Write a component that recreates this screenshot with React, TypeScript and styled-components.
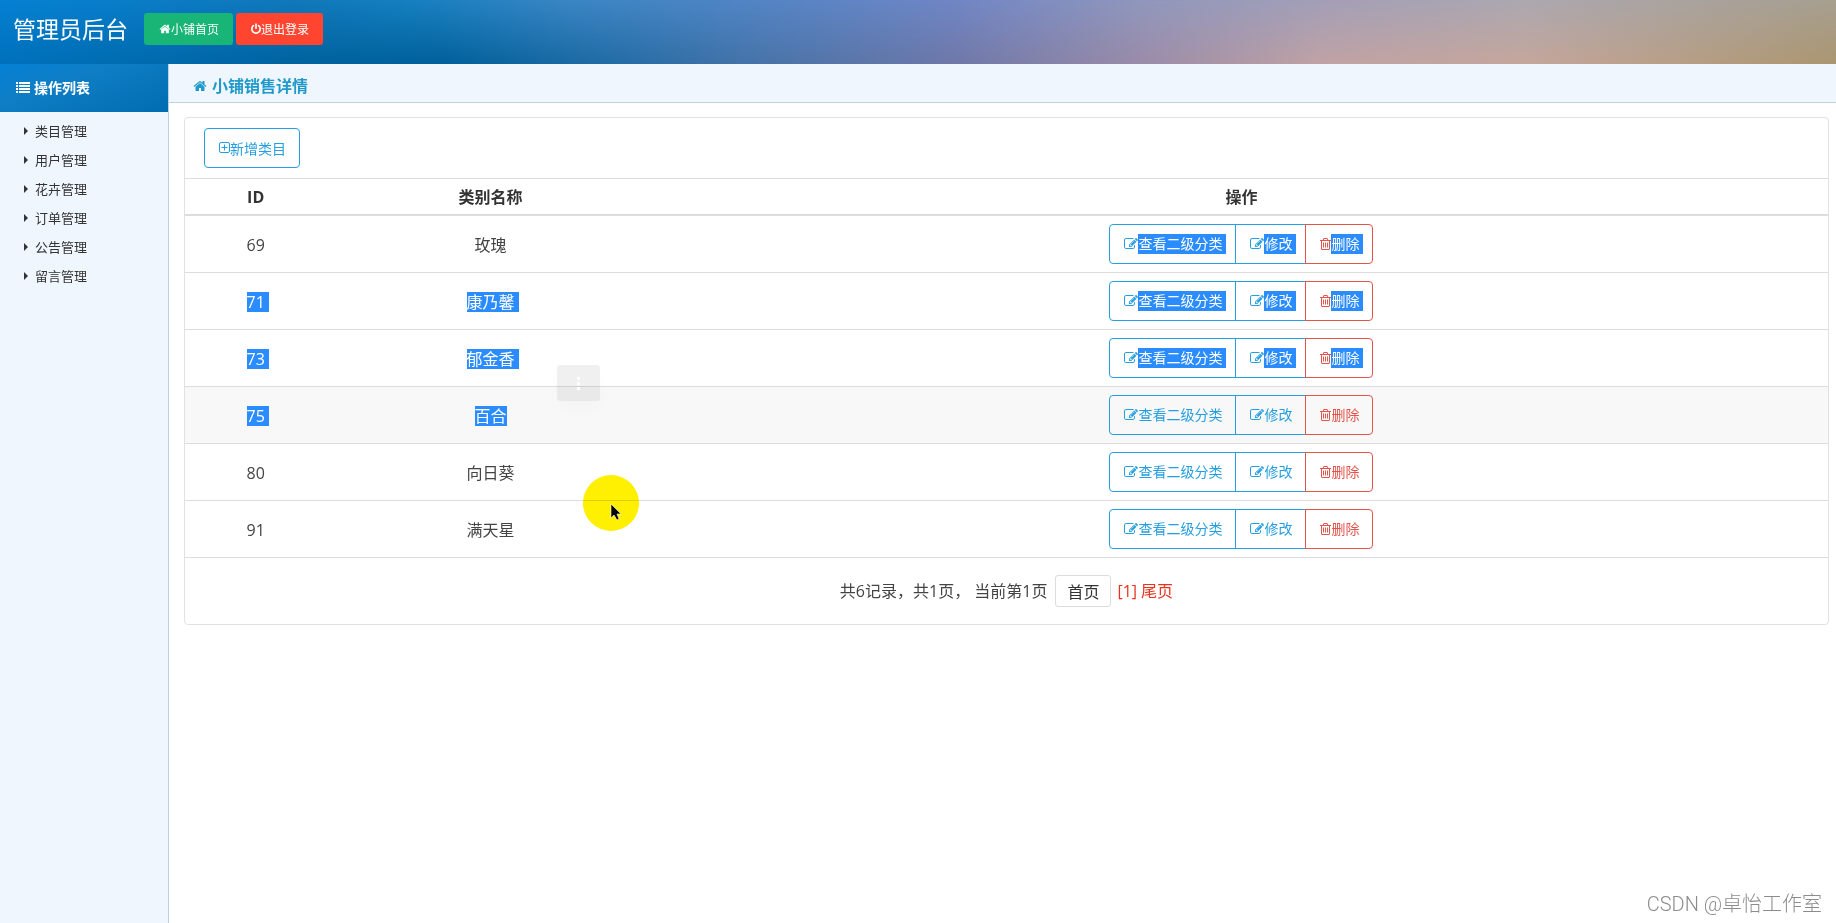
import React from 'react';
import styled, { createGlobalStyle, css } from 'styled-components';

const GlobalStyle = createGlobalStyle`
  *, *::before, *::after { box-sizing: border-box; }
  body {
    margin: 0;
    background: #fff;
    color: #444;
    font-family: "Open Sans", "Noto Sans CJK SC", sans-serif;
    font-size: 16px;
    line-height: 20px;
  }
  button { font-family: inherit; cursor: pointer; }
  a { text-decoration: none; color: inherit; }
`;

const Page = styled.div`
  position: relative;
  display: flex;
  flex-direction: column;
  min-height: 100vh;
`;

const Header = styled.header`
  position: relative;
  display: flex;
  align-items: flex-start;
  height: 64px;
  padding: 13px 13px 0;
  background: linear-gradient(90deg, #0581d3 0%, #1178bb 16%, #1580c0 22%, #3a86c4 31%, #5585c5 42%, #7086c5 52%, #9097bd 62%, #a39fb8 72%, #aca8b0 83%, #a79f90 100%);

  &::before {
    content: "";
    position: absolute;
    inset: 0;
    background: linear-gradient(90deg, #0071bb 0%, #00639f 16%, #00609a 24%, #216ca5 33%, #4a74a8 42%, #6f78a8 52%, #9a8ba8 62%, #c0a2a4 72%, #c5a69c 83%, #aa9670 100%);
    mask-image: linear-gradient(180deg, transparent, #000);
  }

  > * { position: relative; }
`;

const Brand = styled.h1`
  margin: 0 16px 0 0;
  color: #fff;
  font-size: 23px;
  font-weight: 400;
  line-height: 32px;
`;

const HeaderButton = styled.button<{ $tone: string }>`
  display: flex;
  align-items: center;
  height: 32px;
  margin-right: 3px;
  padding: 0 14px 0 15px;
  border: 0;
  border-radius: 3px;
  background: ${(p) => p.$tone};
  color: #fff;
  font-size: 12px;
`;

const Body = styled.div`
  display: flex;
  flex: 1;
`;

const Sidebar = styled.aside`
  flex: 0 0 169px;
  border-right: 1px solid #b9d2e4;
  background: #f0f6fe;
`;

const SidebarTitle = styled.h2`
  display: flex;
  align-items: center;
  gap: 4px;
  height: 48px;
  margin: 0;
  padding-left: 16px;
  background: linear-gradient(160deg, #0580d4 0%, #0f7dc4 40%, #006cb0 100%);
  color: #fff;
  font-size: 14px;
  font-weight: 700;
`;

const Menu = styled.nav`
  display: flex;
  flex-direction: column;
  padding: 4px 0;
`;

const MenuLink = styled.a`
  display: flex;
  align-items: center;
  gap: 7px;
  height: 29px;
  padding-left: 24px;
  color: #333;
  font-size: 13px;
`;

const Main = styled.main`
  flex: 1;
  min-width: 0;
`;

const TitleBar = styled.div`
  display: flex;
  align-items: center;
  gap: 5px;
  height: 39px;
  padding: 5px 24px 0;
  border-bottom: 1px solid #bdd4e4;
  background: #f0f6fe;
  color: #219acb;
`;

const PageTitle = styled.h3`
  margin: 0;
  font-size: 16px;
  font-weight: 600;
`;

const Card = styled.section`
  margin: 14px 7px 0 15px;
  border: 1px solid #e2e2e2;
  border-radius: 4px;
`;

const Toolbar = styled.div`
  padding: 10px 19px;
`;

const toneColors = { blue: '#259fe0', red: '#e4544a' };

const OutlineButton = styled.button<{ $tone?: 'blue' | 'red' }>`
  display: inline-flex;
  align-items: center;
  height: 40px;
  padding: 0 13px 0 14px;
  border: 1px solid ${(p) => toneColors[p.$tone ?? 'blue']};
  border-radius: 4px;
  background: transparent;
  color: ${(p) => toneColors[p.$tone ?? 'blue']};
  font-size: 14px;
`;

const ButtonGroup = styled.div`
  display: inline-flex;
  vertical-align: top;

  ${OutlineButton} {
    border-radius: 0;
  }
  ${OutlineButton}:first-child { border-radius: 4px 0 0 4px; }
  ${OutlineButton}:last-child { border-radius: 0 4px 4px 0; }
  ${OutlineButton} + ${OutlineButton} { margin-left: -1px; }
`;

const Table = styled.table`
  width: 100%;
  border-collapse: separate;
  border-spacing: 0;
  table-layout: fixed;
  text-align: center;
`;

const HeadCell = styled.th<{ $width?: string }>`
  width: ${(p) => p.$width ?? 'auto'};
  height: 38px;
  padding: 0;
  border-top: 1px solid #ddd;
  border-bottom: 2px solid #ddd;
  color: #333;
  font-weight: 700;
`;

const Row = styled.tr<{ $hovered?: boolean }>`
  background: ${(p) => (p.$hovered ? '#f8f8f8' : 'transparent')};
`;

const Cell = styled.td`
  height: 57px;
  padding: 8px 0;
  border-bottom: 1px solid #ddd;
  vertical-align: middle;
`;

const TextCell = styled(Cell)`
  padding-top: 10px;
`;

const Mark = styled.span<{ $on?: boolean; $tail?: boolean }>`
  display: inline-block;
  line-height: 20px;
  ${(p) => p.$on && css`
    background: #2b8cff;
    color: #fff;
  `}
  ${(p) => p.$on && p.$tail && css`
    box-shadow: 4px 0 0 #2b8cff;
  `}
`;

const Pagination = styled.div`
  display: flex;
  align-items: center;
  justify-content: center;
  height: 66px;
`;

const PageButton = styled.button`
  height: 32px;
  margin: 0 6px 0 8px;
  padding: 0 11px;
  border: 1px solid #ddd;
  border-radius: 3px;
  background: #fff;
  color: #333;
  font-size: 16px;
`;

const PageStatus = styled.span`
  white-space: pre;
`;

const PageLinks = styled.span`
  display: flex;
  gap: 4px;
  color: #e8331f;
`;

const QuickMenu = styled.div`
  position: absolute;
  left: 557px;
  top: 365px;
  display: flex;
  flex-direction: column;
  align-items: center;
  justify-content: center;
  gap: 2px;
  width: 43px;
  height: 36px;
  border-radius: 3px;
  background: rgba(0, 0, 0, 0.06);
  box-shadow: 0 8px 16px rgba(0, 0, 0, 0.02);
`;

const Dot = styled.i`
  width: 3px;
  height: 3px;
  background: #fff;
`;

const Spotlight = styled.div`
  position: absolute;
  left: 583px;
  top: 475px;
  width: 56px;
  height: 56px;
  border-radius: 50%;
  background: #ffef00;
  mix-blend-mode: multiply;
`;

const Pointer = styled.svg`
  position: absolute;
  left: 610px;
  top: 503px;
`;

const Watermark = styled.div`
  position: absolute;
  right: 14px;
  bottom: 5px;
  color: #8c8c8c;
  font-family: Roboto, "Noto Sans CJK SC", sans-serif;
  font-size: 20px;
  font-weight: 300;
  line-height: 28px;
`;

const HOME = 'M1472 992v480q0 26-19 45t-45 19h-384v-384h-256v384h-384q-26 0-45-19t-19-45v-480q0-1 .5-3t.5-3l575-474 575 474q1 2 1 6zm223-69l-62 74q-8 9-21 11h-3q-13 0-21-7l-692-577-692 577q-12 8-24 7-13-2-21-11l-62-74q-8-10-7-23.5t11-21.5l719-599q32-26 76-26t76 26l244 204v-195q0-14 9-23t23-9h192q14 0 23 9t9 23v408l219 182q10 8 11 21.5t-7 23.5z';
const POWER = 'M1664 896q0 156-61 298t-164 245-245 164-298 61-298-61-245-164-164-245-61-298q0-182 80.5-343t226.5-270q43-32 95.5-25t83.5 50q32 42 24.5 94.5t-49.5 84.5q-98 74-151.5 181t-53.5 228q0 104 40.5 198.5t109.5 163.5 163.5 109.5 198.5 40.5 198.5-40.5 163.5-109.5 109.5-163.5 40.5-198.5q0-121-53.5-228t-151.5-181q-42-32-49.5-84.5t24.5-94.5q31-43 84-50t95 25q146 109 226.5 270t80.5 343zm-640-768v640q0 52-38 90t-90 38-90-38-38-90v-640q0-52 38-90t90-38 90 38 38 90z';
const EDIT = 'M888 1184l116-116-152-152-116 116v56h96v96h56zm440-720q-16-16-33 1l-350 350q-17 17-1 33t33-1l350-350q17-17 1-33zm80 594v190q0 119-84.5 203.5t-203.5 84.5h-832q-119 0-203.5-84.5t-84.5-203.5v-832q0-119 84.5-203.5t203.5-84.5h832q63 0 117 25 15 7 18 23 3 17-9 29l-49 49q-14 14-32 8-23-6-45-6h-832q-66 0-113 47t-47 113v832q0 66 47 113t113 47h832q66 0 113-47t47-113v-126q0-13 9-22l64-64q15-15 35-7t20 29zm-96-738l288 288-672 672h-288v-288zm444 132l-92 92-288-288 92-92q28-28 68-28t68 28l152 152q28 28 28 68t-28 68z';
const TRASH = 'M704 736v576q0 14-9 23t-23 9h-64q-14 0-23-9t-9-23v-576q0-14 9-23t23-9h64q14 0 23 9t9 23zm256 0v576q0 14-9 23t-23 9h-64q-14 0-23-9t-9-23v-576q0-14 9-23t23-9h64q14 0 23 9t9 23zm256 0v576q0 14-9 23t-23 9h-64q-14 0-23-9t-9-23v-576q0-14 9-23t23-9h64q14 0 23 9t9 23zm128 724v-948h-896v948q0 22 7 40.5t14.5 27 10.5 8.5h832q3 0 10.5-8.5t14.5-27 7-40.5zm-672-1076h448l-48-117q-7-9-17-11h-317q-10 2-17 11zm928 32v64q0 14-9 23t-23 9h-96v948q0 83-47 143.5t-113 60.5h-832q-66 0-113-58.5t-47-141.5v-952h-96q-14 0-23-9t-9-23v-64q0-14 9-23t23-9h309l70-167q15-37 54-63t79-26h320q40 0 79 26t54 63l70 167h309q14 0 23 9t9 23z';

const Glyph = ({ d, width, height, box = '0 0 1792 1792' }: { d: string; width: number; height: number; box?: string }) => (
  <svg width={width} height={height} viewBox={box} fill="currentColor" aria-hidden="true">
    <path d={d} />
  </svg>
);

const ListIcon = () => (
  <svg width="14" height="12" viewBox="0 0 14 12" fill="currentColor" aria-hidden="true">
    {[0, 3, 6, 9].map((y) => (
      <g key={y}>
        <rect x="0" y={y} width="2" height="2" />
        <rect x="3" y={y} width="11" height="2" />
      </g>
    ))}
  </svg>
);

const PlusSquareIcon = () => (
  <svg width="11" height="12" viewBox="0 0 11 12" fill="none" stroke="currentColor" aria-hidden="true">
    <rect x="0.5" y="0.5" width="10" height="10" rx="1.5" />
    <path d="M2.5 5.5h6M5.5 2.5v6" />
  </svg>
);

const CaretIcon = () => (
  <svg width="4" height="8" viewBox="0 0 4 8" fill="currentColor" aria-hidden="true">
    <path d="M0 0l4 4-4 4z" />
  </svg>
);

const menuItems = ['类目管理', '用户管理', '花卉管理', '订单管理', '公告管理', '留言管理'];

interface Category {
  id: number;
  name: string;
  textSelected?: boolean;
  actionsSelected?: boolean;
  hovered?: boolean;
}

const categories: Category[] = [
  { id: 69, name: '玫瑰', actionsSelected: true },
  { id: 71, name: '康乃馨', textSelected: true, actionsSelected: true },
  { id: 73, name: '郁金香', textSelected: true, actionsSelected: true },
  { id: 75, name: '百合', textSelected: true, hovered: true },
  { id: 80, name: '向日葵' },
  { id: 91, name: '满天星' },
];

const CategoryRow = ({ item }: { item: Category }) => (
  <Row $hovered={item.hovered}>
    <TextCell><Mark $on={item.textSelected} $tail>{item.id}</Mark></TextCell>
    <TextCell><Mark $on={item.textSelected} $tail={!item.hovered}>{item.name}</Mark></TextCell>
    <Cell>
      <ButtonGroup>
        <OutlineButton type="button">
          <Glyph d={EDIT} width={14} height={14} />
          <Mark $on={item.actionsSelected} $tail>查看二级分类</Mark>
        </OutlineButton>
        <OutlineButton type="button">
          <Glyph d={EDIT} width={14} height={14} />
          <Mark $on={item.actionsSelected} $tail>修改</Mark>
        </OutlineButton>
        <OutlineButton type="button" $tone="red">
          <Glyph d={TRASH} width={11} height={12} box="192 128 1408 1536" />
          <Mark $on={item.actionsSelected} $tail>删除</Mark>
        </OutlineButton>
      </ButtonGroup>
    </Cell>
  </Row>
);

export default function App() {
  return (
    <Page>
      <GlobalStyle />
      <Header>
        <Brand>管理员后台</Brand>
        <HeaderButton type="button" $tone="#18b577">
          <Glyph d={HOME} width={12} height={12} />小铺首页
        </HeaderButton>
        <HeaderButton type="button" $tone="#ff4530">
          <Glyph d={POWER} width={10} height={12} box="128 0 1536 1792" />退出登录
        </HeaderButton>
      </Header>
      <Body>
        <Sidebar>
          <SidebarTitle><ListIcon />操作列表</SidebarTitle>
          <Menu>
            {menuItems.map((label) => (
              <MenuLink href="#" key={label}><CaretIcon />{label}</MenuLink>
            ))}
          </Menu>
        </Sidebar>
        <Main>
          <TitleBar>
            <Glyph d={HOME} width={14} height={14} />
            <PageTitle>小铺销售详情</PageTitle>
          </TitleBar>
          <Card>
            <Toolbar>
              <OutlineButton type="button"><PlusSquareIcon />新增类目</OutlineButton>
            </Toolbar>
            <Table>
              <thead>
                <tr>
                  <HeadCell $width="8.6%">ID</HeadCell>
                  <HeadCell $width="20%">类别名称</HeadCell>
                  <HeadCell>操作</HeadCell>
                </tr>
              </thead>
              <tbody>
                {categories.map((item) => <CategoryRow item={item} key={item.id} />)}
              </tbody>
            </Table>
            <Pagination>
              <PageStatus>共6记录，共1页， 当前第1页</PageStatus>
              <PageButton type="button">首页</PageButton>
              <PageLinks><a href="#">[1]</a><a href="#">尾页</a></PageLinks>
            </Pagination>
          </Card>
        </Main>
      </Body>
      <QuickMenu><Dot /><Dot /><Dot /></QuickMenu>
      <Spotlight />
      <Pointer width="12" height="18" viewBox="0 0 12 18" aria-hidden="true">
        <path d="M1 1v14l3-3 3 5 2-1-2-5h4z" fill="#000" stroke="#fff" strokeWidth="0.6" />
      </Pointer>
      <Watermark>CSDN @卓怡工作室</Watermark>
    </Page>
  );
}
